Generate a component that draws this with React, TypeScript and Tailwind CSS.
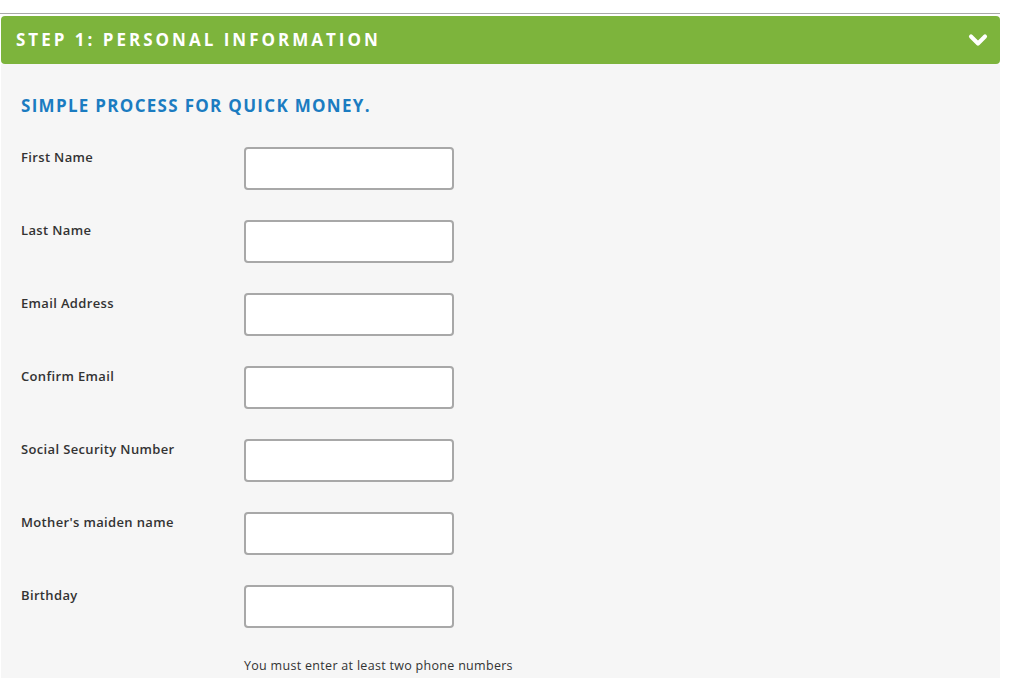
import { ChevronDown } from 'lucide-react';

const fields = [
  'First Name',
  'Last Name',
  'Email Address',
  'Confirm Email',
  'Social Security Number',
  "Mother's maiden name",
  'Birthday',
];

const App = () => {
  return (
    <div className="min-h-screen bg-white font-['Open_Sans',sans-serif]">
      <div className="w-[1000px] pt-[13px]">
        <div className="h-px bg-[#a9a9a9]" />
        <div className="ml-px mt-[2px] flex h-[48px] items-center justify-between rounded-[4px] bg-[#7db43c] pl-[15px] pr-[8px]">
          <h1 className="text-[17px] font-bold tracking-[3px] text-white">STEP 1: PERSONAL INFORMATION</h1>
          <ChevronDown className="h-[28px] w-[28px] text-white" strokeWidth={3.5} />
        </div>
        <div className="ml-px bg-[#f6f6f6] px-[20px] pt-[29px] pb-[10px]">
          <h2 className="text-[17px] font-bold tracking-[1.3px] text-[#1b7cc1]">SIMPLE PROCESS FOR QUICK MONEY.</h2>
          <div className="mt-[28px] flex flex-col gap-[30px]">
            {fields.map((label) => (
              <div key={label} className="flex items-start">
                <label className="w-[223px] pt-[1px] text-[13px] font-semibold tracking-[0.35px] text-[#333]">{label}</label>
                <input
                  type="text"
                  className="h-[43px] w-[210px] rounded-[4px] border-2 border-[#a8a8a8] bg-white"
                />
              </div>
            ))}
          </div>
          <p className="mt-[29px] pl-[223px] text-[12.5px] tracking-[0.3px] text-[#333]">You must enter at least two phone numbers</p>
        </div>
      </div>
    </div>
  );
};

export default App;
